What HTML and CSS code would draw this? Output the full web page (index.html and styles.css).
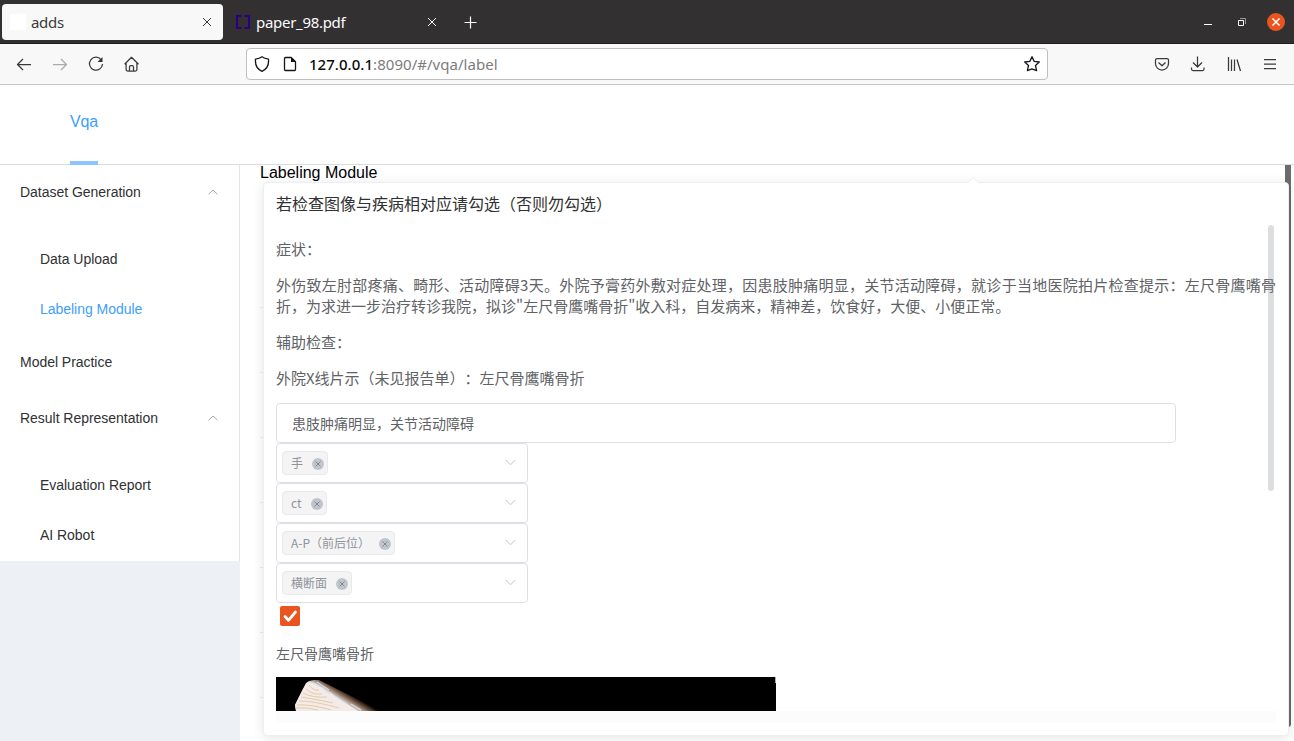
FILE: index.html
```
<!DOCTYPE html>
<html lang="zh-CN">
<head>
<meta charset="utf-8">
<title>adds</title>
<link rel="stylesheet" href="styles.css">
</head>
<body>
<div class="tabbar">
  <div class="tab tab-active">
    <span class="favicon-blank"></span><span class="tab-title">adds</span>
    <svg class="tab-close" width="10" height="10" viewBox="0 0 10 10"><path d="M1 1l8 8M9 1l-8 8"/></svg>
  </div>
  <div class="tab tab-idle">
    <svg class="favicon-pdf" width="14" height="14" viewBox="0 0 14 14"><path d="M5.500 1H1v12h4.500M8.500 1H13v12H8.500"/></svg>
    <span class="tab-title">paper_98.pdf</span>
    <svg class="tab-close" width="10" height="10" viewBox="0 0 10 10"><path d="M1 1l8 8M9 1l-8 8"/></svg>
  </div>
  <svg class="new-tab" width="13" height="13" viewBox="0 0 13 13"><path d="M6.500 .5v12M.5 6.500h12"/></svg>
  <div class="window-controls">
    <svg width="8" height="8" viewBox="0 0 8 8"><path d="M0 6.500h8" stroke="#fff"/></svg>
    <svg width="8" height="8" viewBox="0 0 8 8" fill="none"><path d="M2 .5h5.500V6" stroke="#999"/><path d="M.5 2.500h5v5h-5z" stroke="#fff"/></svg>
    <svg width="18" height="18" viewBox="0 0 18 18"><circle cx="9" cy="9" r="9" fill="#e95420"/><path d="M5.500 5.500l7 7M12.500 5.500l-7 7" stroke="#fff" stroke-width="1.500"/></svg>
  </div>
</div>
<div class="toolbar">
  <div class="nav-buttons">
    <svg width="16" height="16" viewBox="0 0 16 16"><path d="M15 8.500H1.500M7 3L1.500 8.500 7 14"/></svg>
    <svg class="disabled" width="16" height="16" viewBox="0 0 16 16"><path d="M1 8.500h13.500M9 3l5.500 5.500L9 14"/></svg>
    <svg width="16" height="16" viewBox="0 0 16 16"><path d="M13.200 3.800A6.500 6.500 0 1 0 14.500 8"/><path d="M14.500 1v5h-5z" fill="#333" stroke="none"/></svg>
    <svg width="16" height="16" viewBox="0 0 16 16"><path d="M.6 8.300L7.500 1.300l7 7M2.100 7v6.500q0 1.500 1.500 1.500h7.800q1.500 0 1.500-1.500V7M5.500 15v-4q0-1.300 1.300-1.300h1.400Q9.500 9.700 9.500 11v4"/></svg>
  </div>
  <div class="urlbar">
    <svg width="16" height="16" viewBox="0 0 16 16"><path d="M8 .8C6 2.300 4 2.800 1.500 3.200 1 8.800 3.300 13.200 8 15.300c4.700-2.100 7-6.500 6.500-12.100C12 2.800 10 2.300 8 .8z"/></svg>
    <svg class="page-icon" width="16" height="16" viewBox="0 0 16 16"><path d="M3.500 1.500h5.700l4.300 4.300v7.700q0 1-1 1h-9q-1 0-1-1v-11q0-1 1-1z"/><path d="M9 1v5h5z" fill="#15141a" stroke="none"/></svg>
    <span class="url"><b>127.0.0.1</b>:8090/#/vqa/label</span>
    <svg class="star" width="18" height="18" viewBox="0 0 18 18"><path d="M9 1.700l2.200 4.700 5.100.6-3.800 3.500 1.100 5.100L9 13.900l-4.600 1.700 1.100-5.100L1.700 7l5.100-.6z"/></svg>
  </div>
  <div class="tool-icons">
    <svg width="16" height="16" viewBox="0 0 16 16"><path d="M3 2.500h10q1.500 0 1.500 1.500v3.500a6.500 6.500 0 0 1-13 0V4q0-1.500 1.500-1.500zM4.500 6.500L8 9.800l3.500-3.300"/></svg>
    <svg width="16" height="16" viewBox="0 0 16 16"><path d="M7.500 .5v10M3 6.500L7.500 11 12 6.500M1.500 11.500V13q0 1.500 1.500 1.500h9.500q1.500 0 1.500-1.500v-1.500"/></svg>
    <svg width="16" height="16" viewBox="0 0 16 16"><path d="M2.500 1v14M5.500 3.500V15M8.500 3.500V15M11 3.500L14.500 15"/></svg>
    <svg width="16" height="16" viewBox="0 0 16 16"><path d="M2 3.500h12M2 8h12M2 12.500h12"/></svg>
  </div>
</div>
<header class="header"><span class="header-item">Vqa</span></header>
<div class="body">
  <aside class="aside">
    <nav class="menu">
      <div class="menu-title first">Dataset Generation<svg width="10" height="6" viewBox="0 0 10 6"><path d="M.5 5.300L5 1l4.500 4.300"/></svg></div>
      <div class="menu-group">
        <div class="menu-item">Data Upload</div>
        <div class="menu-item active">Labeling Module</div>
      </div>
      <div class="menu-title">Model Practice</div>
      <div class="menu-title">Result Representation<svg width="10" height="6" viewBox="0 0 10 6"><path d="M.5 5.300L5 1l4.500 4.300"/></svg></div>
      <div class="menu-group">
        <div class="menu-item">Evaluation Report</div>
        <div class="menu-item">AI Robot</div>
      </div>
    </nav>
  </aside>
  <main class="main">
    <div class="page-title">Labeling Module</div>
    <div class="table-rows"><i></i><i></i><i></i><i></i><i></i><i></i><i></i></div>
    <div class="page-scroll"></div>
    <section class="popover">
      <svg class="arrow" width="12" height="7" viewBox="0 0 12 7"><path d="M0 6.500L6 .5l6 6V7H0z" fill="#fff"/><path d="M0 6.500L6 .5l6 6" fill="none" stroke="#ebeef5"/></svg>
      <div class="popover-title">若检查图像与疾病相对应请勾选（否则勿勾选）</div>
      <div class="scroll-view">
        <p>症状：</p>
        <p class="detail">外伤致左肘部疼痛、畸形、活动障碍3天。外院予膏药外敷对症处理，因患肢肿痛明显，关节活动障碍，就诊于当地医院拍片检查提示：左尺骨鹰嘴骨折，为求进一步治疗转诊我院，拟诊"左尺骨鹰嘴骨折"收入科，自发病来，精神差，饮食好，大便、小便正常。</p>
        <p>辅助检查：</p>
        <p>外院X线片示（未见报告单）：左尺骨鹰嘴骨折</p>
        <div class="input">患肢肿痛明显，关节活动障碍</div>
        <div class="select"><span class="tag">手<svg width="12" height="12" viewBox="0 0 12 12"><circle cx="6" cy="6" r="6"/><path d="M3.500 3.500l5 5M8.500 3.500l-5 5"/></svg></span><svg class="caret" width="12" height="7" viewBox="0 0 12 7"><path d="M.5 .8l5 5 5-5"/></svg></div>
        <div class="select"><span class="tag">ct<svg width="12" height="12" viewBox="0 0 12 12"><circle cx="6" cy="6" r="6"/><path d="M3.500 3.500l5 5M8.500 3.500l-5 5"/></svg></span><svg class="caret" width="12" height="7" viewBox="0 0 12 7"><path d="M.5 .8l5 5 5-5"/></svg></div>
        <div class="select"><span class="tag">A-P（前后位）<svg width="12" height="12" viewBox="0 0 12 12"><circle cx="6" cy="6" r="6"/><path d="M3.500 3.500l5 5M8.500 3.500l-5 5"/></svg></span><svg class="caret" width="12" height="7" viewBox="0 0 12 7"><path d="M.5 .8l5 5 5-5"/></svg></div>
        <div class="select"><span class="tag">横断面<svg width="12" height="12" viewBox="0 0 12 12"><circle cx="6" cy="6" r="6"/><path d="M3.500 3.500l5 5M8.500 3.500l-5 5"/></svg></span><svg class="caret" width="12" height="7" viewBox="0 0 12 7"><path d="M.5 .8l5 5 5-5"/></svg></div>
        <svg class="checkbox" width="20" height="20" viewBox="0 0 20 20"><rect width="20" height="20" rx="2" fill="#e95420"/><path d="M5 10.500l3.500 3.800L15.500 6" fill="none" stroke="#fff" stroke-width="2.800" stroke-linecap="round" stroke-linejoin="round"/></svg>
        <p class="caption">左尺骨鹰嘴骨折</p>
        <svg class="scan" width="500" height="34" viewBox="0 0 500 34">
          <defs>
            <linearGradient id="bone" gradientUnits="userSpaceOnUse" x1="62" y1="27" x2="70" y2="14">
              <stop offset="0" stop-color="#d9d8d8"/><stop offset=".4" stop-color="#c3b7a9"/><stop offset=".7" stop-color="#705440"/><stop offset="1" stop-color="#080402"/>
            </linearGradient>
          </defs>
          <rect width="500" height="34" fill="#000"/>
          <path d="M33 4l5-1 5 0 18 9 40 20 2 2H20l-1-6 4-8 4-8 3-6z" fill="url(#bone)"/>
          <path d="M32 5l7 1 13 8 16 11 14 9H20l-1-6 4-8 4-8 3-5z" fill="#f4ebe8"/>
          <g fill="none" stroke="#e2cda8" stroke-width="1"><path d="M33 8q4 6 10 5M30 12q6 6 16 5M27 16q9 5 24 4M25 20q14 2 32 6M23 24q16 0 40 7M21 28q14-1 34 5M20 31q10-1 22 2"/></g>
          <g fill="none" stroke="#d6dde8" stroke-width="1.200"><path d="M37 6l10 5 7 6M41 5l12 8M57 18l14 9M75 27l10 6"/></g>
          <path d="M499.500 0v6" stroke="#aaa"/>
        </svg>
        <div class="next-row"></div>
        <div class="inner-scroll"></div>
      </div>
    </section>
  </main>
</div>
</body>
</html>
```
FILE: styles.css
```
* { box-sizing: border-box; }
body { margin: 0; width: 1294px; height: 741px; overflow: hidden; display: flex; flex-direction: column; background: #fff; font-family: "Liberation Sans", "Noto Sans CJK SC", sans-serif; }
svg { flex: none; display: block; }

.tabbar { height: 44px; flex: none; display: flex; align-items: center; background: #333031; border-bottom: 1px solid #1f1d1e; padding: 4px 9px 3px 2px; font: 15px "Noto Sans", sans-serif; color: #fbfbfe; }
.tab { height: 36px; display: flex; align-items: center; }
.tab-active { width: 221px; background: #f8f8f8; border-radius: 4px; color: #3b3a3c; padding: 0 11px 0 8px; }
.tab-idle { width: 223px; padding: 0 9px 0 13px; }
.favicon-blank { width: 16px; height: 16px; background: #fff; margin-right: 5px; }
.favicon-pdf { margin-right: 6px; fill: none; stroke: #2b0080; stroke-width: 2; }
.tab-title { flex: 1; letter-spacing: -.3px; }
.tab-close { fill: none; stroke: currentColor; stroke-width: 1; }
.new-tab { margin-left: 18px; fill: none; stroke: #fff; stroke-width: 1.2; }
.window-controls { margin-left: auto; display: flex; align-items: center; gap: 26px; }
.window-controls svg:last-child { margin-left: -5px; }

.toolbar { height: 41px; flex: none; display: flex; align-items: center; background: #f8f8f8; border-bottom: 1px solid #c4c4c4; padding: 0 16px; }
.nav-buttons, .tool-icons { display: flex; gap: 20px; }
.nav-buttons svg, .tool-icons svg { fill: none; stroke: #3a3a3c; stroke-width: 1.25; stroke-linejoin: round; }
.nav-buttons .disabled { stroke: #aaa; }
.urlbar { margin-left: 106px; width: 802px; height: 32px; display: flex; align-items: center; border: 1px solid #bfbfbf; border-radius: 4px; background: #fff; padding: 0 6px 0 7px; }
.urlbar svg { fill: none; stroke: #15141a; stroke-width: 1.3; stroke-linejoin: round; }
.urlbar .page-icon { margin: 0 11px 0 12px; }
.urlbar .star { margin-left: auto; }
.url { font: 15px "Noto Sans", sans-serif; color: #7c7c7c; letter-spacing: .04px; }
.url b { font-weight: 500; color: #0c0c0d; }
.tool-icons { margin-left: auto; }

.header { height: 80px; flex: none; border-bottom: 1px solid #d8dce6; padding-left: 70px; display: flex; }
.header-item { width: 28px; height: 80px; line-height: 73px; font-size: 16px; letter-spacing: -.2px; color: #409eff; border-bottom: 4px solid #8cc5ff; }

.body { flex: 1; display: flex; min-height: 0; }
.aside { width: 240px; flex: none; background: #edf1f6; }
.menu { height: 396px; background: #fff; border-right: 1px solid #e2e4ea; font-size: 14px; letter-spacing: -.03px; color: #303133; }
.menu-title { height: 56px; padding: 0 21px 0 20px; display: flex; align-items: center; justify-content: space-between; }
.menu-title.first { height: 55px; padding-bottom: 2px; }
.menu-title svg { fill: none; stroke: #a5a8ad; }
.menu-group { padding-top: 14px; }
.menu-item { height: 50px; line-height: 50px; padding-left: 40px; }
.menu-item.active { color: #409eff; }

.main { flex: 1; position: relative; padding-left: 20px; overflow: hidden; }
.page-title { font-size: 16px; line-height: 16px; color: #000; }
.table-rows { padding-top: 126px; display: flex; flex-direction: column; }
.table-rows i { height: 65px; flex: none; width: 1010px; border-top: 1px solid #ebeef5; }
.page-scroll { position: absolute; top: 0; right: 3px; width: 6px; height: 562px; background: #6b6b6b; border-radius: 0 0 3px 3px; }

.popover { position: absolute; left: 23px; top: 17px; width: 1026px; height: 554px; padding: 12px; background: #fff; border: 1px solid #ebeef5; border-radius: 4px; box-shadow: 0 2px 12px rgba(0,0,0,.1); font-family: "Noto Sans CJK SC", sans-serif; color: #606266; text-spacing-trim: space-all; }
.arrow { position: absolute; left: 703px; top: -6px; }
.popover-title { font-size: 16px; line-height: 16px; color: #303133; margin-bottom: 12px; }
.scroll-view { position: relative; width: 1000px; height: 500px; overflow: hidden; display: flex; flex-direction: column; }
.scroll-view p { margin: 15px 0 0; font-size: 15px; line-height: 21px; }
.scroll-view .detail { text-align: justify; }
.input { width: 900px; height: 40px; flex: none; margin-top: 15px; padding-left: 15px; line-height: 38px; font-size: 14px; border: 1px solid #dcdfe6; border-radius: 4px; }
.select { width: 252px; height: 40px; flex: none; display: flex; align-items: center; justify-content: space-between; padding: 0 10px 0 5px; border: 1px solid #dcdfe6; border-radius: 4px; }
.tag { height: 24px; display: flex; align-items: center; gap: 9px; padding: 0 3px 2px 8px; font-size: 12px; color: #909399; background: #f4f4f5; border: 1px solid #e9e9eb; border-radius: 4px; }
.tag svg { fill: #c0c4cc; margin-top: 4px; }
.tag path { stroke: #85888e; }
.caret { fill: none; stroke: #c0c4cc; margin-top: -2px; }
.checkbox { margin: 3px 0 0 4px; }
.scroll-view .caption { margin-top: 17px; font-size: 14px; line-height: 20px; }
.scan { margin-top: 14px; }
.next-row { flex: 1; background: #fcfcfc; }
.inner-scroll { position: absolute; right: 2px; top: 2px; width: 6px; height: 266px; border-radius: 3px; background: rgba(144,147,153,.3); }
```
